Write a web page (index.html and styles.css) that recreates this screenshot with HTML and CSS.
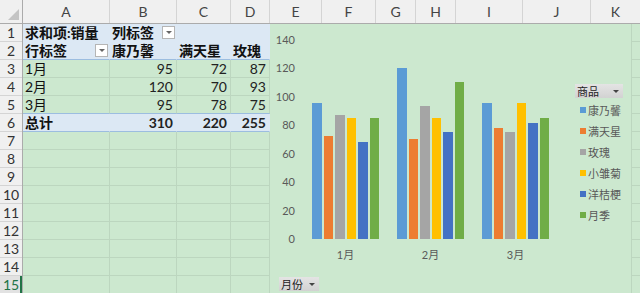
FILE: index.html
```html
<!DOCTYPE html>
<html>
<head>
    <title>数据透视表</title>
    <meta charset="utf-8">
    <link rel="stylesheet" href="styles.css">
</head>
<body>
<div class="sheet">
    <div class="col-heads">
        <div class="corner"><span class="corner-tri"></span></div>
        <div class="col-head" style="width: 87px">A</div>
        <div class="col-head" style="width: 67px">B</div>
        <div class="col-head" style="width: 54px">C</div>
        <div class="col-head" style="width: 39px">D</div>
        <div class="col-head" style="width: 52px">E</div>
        <div class="col-head" style="width: 54px">F</div>
        <div class="col-head" style="width: 40px">G</div>
        <div class="col-head" style="width: 40px">H</div>
        <div class="col-head" style="width: 67px">I</div>
        <div class="col-head" style="width: 68px">J</div>
        <div class="col-head last">K</div>
    </div>

    <div class="sheet-body">
        <div class="row-heads">
            <div class="row-head">1</div>
            <div class="row-head">2</div>
            <div class="row-head">3</div>
            <div class="row-head">4</div>
            <div class="row-head">5</div>
            <div class="row-head">6</div>
            <div class="row-head">7</div>
            <div class="row-head">8</div>
            <div class="row-head">9</div>
            <div class="row-head">10</div>
            <div class="row-head">11</div>
            <div class="row-head">12</div>
            <div class="row-head">13</div>
            <div class="row-head">14</div>
            <div class="row-head active">15</div>
        </div>

        <div class="cells">
            <div class="row pivot-head">
                <div class="cell">求和项:销量</div>
                <div class="cell has-filter">列标签<span class="filter"></span></div>
                <div class="cell"></div>
                <div class="cell"></div>
            </div>
            <div class="row pivot-head header-end">
                <div class="cell has-filter">行标签<span class="filter"></span></div>
                <div class="cell">康乃馨</div>
                <div class="cell">满天星</div>
                <div class="cell">玫瑰</div>
            </div>
            <div class="row">
                <div class="cell">1月</div>
                <div class="cell num">95</div>
                <div class="cell num">72</div>
                <div class="cell num">87</div>
            </div>
            <div class="row">
                <div class="cell">2月</div>
                <div class="cell num">120</div>
                <div class="cell num">70</div>
                <div class="cell num">93</div>
            </div>
            <div class="row before-total">
                <div class="cell">3月</div>
                <div class="cell num">95</div>
                <div class="cell num">78</div>
                <div class="cell num">75</div>
            </div>
            <div class="row pivot-total">
                <div class="cell">总计</div>
                <div class="cell num">310</div>
                <div class="cell num">220</div>
                <div class="cell num">255</div>
            </div>
            <div class="row"><div class="cell"></div><div class="cell"></div><div class="cell"></div><div class="cell"></div></div>
            <div class="row"><div class="cell"></div><div class="cell"></div><div class="cell"></div><div class="cell"></div></div>
            <div class="row"><div class="cell"></div><div class="cell"></div><div class="cell"></div><div class="cell"></div></div>
            <div class="row"><div class="cell"></div><div class="cell"></div><div class="cell"></div><div class="cell"></div></div>
            <div class="row"><div class="cell"></div><div class="cell"></div><div class="cell"></div><div class="cell"></div></div>
            <div class="row"><div class="cell"></div><div class="cell"></div><div class="cell"></div><div class="cell"></div></div>
            <div class="row"><div class="cell"></div><div class="cell"></div><div class="cell"></div><div class="cell"></div></div>
            <div class="row"><div class="cell"></div><div class="cell"></div><div class="cell"></div><div class="cell"></div></div>
            <div class="row"><div class="cell"></div><div class="cell"></div><div class="cell"></div><div class="cell"></div></div>
        </div>

        <!-- pivot chart -->
        <div class="chart">
            <div class="y-axis">
                <span class="tick">140</span>
                <span class="tick">120</span>
                <span class="tick">100</span>
                <span class="tick">80</span>
                <span class="tick">60</span>
                <span class="tick">40</span>
                <span class="tick">20</span>
                <span class="tick">0</span>
            </div>

            <div class="plot">
                <div class="group">
                    <div class="bar c1" style="height: 67.86%"></div>
                    <div class="bar c2" style="height: 51.43%"></div>
                    <div class="bar c3" style="height: 62.14%"></div>
                    <div class="bar c4" style="height: 60.71%"></div>
                    <div class="bar c5" style="height: 48.57%"></div>
                    <div class="bar c6" style="height: 60.71%"></div>
                </div>
                <div class="group">
                    <div class="bar c1" style="height: 85.71%"></div>
                    <div class="bar c2" style="height: 50%"></div>
                    <div class="bar c3" style="height: 66.43%"></div>
                    <div class="bar c4" style="height: 60.71%"></div>
                    <div class="bar c5" style="height: 53.57%"></div>
                    <div class="bar c6" style="height: 78.57%"></div>
                </div>
                <div class="group">
                    <div class="bar c1" style="height: 67.86%"></div>
                    <div class="bar c2" style="height: 55.71%"></div>
                    <div class="bar c3" style="height: 53.57%"></div>
                    <div class="bar c4" style="height: 67.86%"></div>
                    <div class="bar c5" style="height: 57.86%"></div>
                    <div class="bar c6" style="height: 60.71%"></div>
                </div>
            </div>

            <div class="x-axis">
                <span>1月</span>
                <span>2月</span>
                <span>3月</span>
            </div>

            <div class="field-row">
                <span class="field-btn">月份<span class="arrow"></span></span>
            </div>

            <div class="legend">
                <span class="field-btn legend-btn">商品<span class="arrow"></span></span>
                <div class="legend-item"><span class="swatch c1"></span>康乃馨</div>
                <div class="legend-item"><span class="swatch c2"></span>满天星</div>
                <div class="legend-item"><span class="swatch c3"></span>玫瑰</div>
                <div class="legend-item"><span class="swatch c4"></span>小雏菊</div>
                <div class="legend-item"><span class="swatch c5"></span>洋桔梗</div>
                <div class="legend-item"><span class="swatch c6"></span>月季</div>
            </div>
        </div>

        <div class="rest"></div>
    </div>
</div>
</body>
</html>
```

FILE: styles.css
```css
body {
    margin: 0;
    background-color: #cce8cf;
    color: #111;
    font-family: Lato, "Noto Sans CJK SC", sans-serif;
    overflow: hidden;
}

.sheet {
    width: 640px;
    height: 293px;
    overflow: hidden;
}

/* Column letters */
.col-heads {
    display: flex;
    height: 24px;
    background-color: #f0f0f0;
    border-bottom: 1px solid #ababab;
    box-sizing: border-box;
}

.corner {
    position: relative;
    width: 23px;
    flex-shrink: 0;
    border-right: 1px solid #ababab;
    box-sizing: border-box;
}

.corner-tri {
    position: absolute;
    right: 3px;
    bottom: 3px;
    width: 0;
    height: 0;
    border-left: 11px solid transparent;
    border-bottom: 11px solid #c4c4c4;
}

.col-head {
    flex-shrink: 0;
    border-right: 1px solid #d4d4d4;
    box-sizing: border-box;
    text-align: center;
    font-size: 14px;
    line-height: 23px;
    color: #444;
}

.col-head.last {
    flex: 1;
    border-right: none;
}

.sheet-body {
    display: flex;
    height: 270px;
}

/* Row numbers */
.row-heads {
    width: 23px;
    flex-shrink: 0;
    background-color: #f0f0f0;
    border-right: 1px solid #ababab;
    box-sizing: border-box;
}

.row-head {
    height: 18px;
    border-bottom: 1px solid #d4d4d4;
    box-sizing: border-box;
    text-align: center;
    font-size: 14px;
    line-height: 17px;
    color: #333;
}

.row-head.active {
    color: #217346;
    background-color: #e2e2e2;
    box-shadow: inset -2px 0 0 #217346;
}

/* Cells A-D */
.cells {
    flex-shrink: 0;
}

.row {
    display: grid;
    grid-template-columns: 87px 67px 54px 39px;
    height: 18px;
}

.cell {
    border-right: 1px solid #bcd6bf;
    border-bottom: 1px solid #bcd6bf;
    box-sizing: border-box;
    padding: 0 2px;
    font-size: 14px;
    line-height: 17px;
    white-space: nowrap;
    overflow: hidden;
}

.cell.num {
    text-align: right;
    padding-right: 3px;
    color: #222;
}

.has-filter {
    display: flex;
    justify-content: space-between;
    align-items: center;
    padding-right: 1px;
}

.filter {
    position: relative;
    width: 13px;
    height: 13px;
    background-color: #fff;
    border: 1px solid #b5b5b5;
    box-sizing: border-box;
}

.filter::after {
    content: "";
    position: absolute;
    left: 3px;
    top: 4px;
    border-left: 3px solid transparent;
    border-right: 3px solid transparent;
    border-top: 3px solid #666;
}

/* Pivot table style */
.pivot-head .cell,
.pivot-total .cell {
    background-color: #dce8f4;
    border-right-color: #dce8f4;
    border-bottom-color: #dce8f4;
    font-weight: bold;
}

.header-end .cell,
.before-total .cell,
.pivot-total .cell {
    border-bottom-color: #9cbde0;
}

/* Chart */
.chart {
    width: 362px;
    flex-shrink: 0;
    display: grid;
    grid-template-columns: 33px 255px 1fr;
    grid-template-rows: 15px 200px 28px 1fr;
    border-right: 1px solid #bcd6bf;
    box-sizing: border-box;
    color: #595959;
}

.y-axis {
    grid-column: 1;
    grid-row: 2;
    display: flex;
    flex-direction: column;
    justify-content: space-between;
    align-items: flex-end;
    padding-right: 8px;
}

.tick {
    height: 0;
    display: flex;
    align-items: center;
    font-size: 11px;
}

.plot {
    grid-column: 2;
    grid-row: 2;
    display: flex;
}

.group {
    flex: 1;
    display: flex;
    align-items: flex-end;
    gap: 2px;
    padding: 0 9px;
}

.bar {
    flex: 1;
}

.c1 { background-color: #5b9bd5; }
.c2 { background-color: #ed7d31; }
.c3 { background-color: #a5a5a5; }
.c4 { background-color: #ffc000; }
.c5 { background-color: #4472c4; }
.c6 { background-color: #70ad47; }

.x-axis {
    grid-column: 2;
    grid-row: 3;
    display: flex;
    padding-top: 9px;
}

.x-axis span {
    flex: 1;
    text-align: center;
    font-size: 11px;
    line-height: 14px;
}

.field-row {
    grid-column: 1 / span 2;
    grid-row: 4;
    padding: 6px 0 0 9px;
}

.field-btn {
    display: inline-flex;
    align-items: center;
    justify-content: space-between;
    width: 40px;
    height: 14px;
    padding: 0 4px 0 2px;
    box-sizing: border-box;
    background: linear-gradient(#e4e4e4, #d2d2d2);
    font-size: 11px;
    color: #222;
}

.arrow {
    border-left: 3px solid transparent;
    border-right: 3px solid transparent;
    border-top: 3px solid #444;
}

.legend {
    grid-column: 3;
    grid-row: 1 / -1;
    padding: 56px 0 0 17px;
}

.legend-btn {
    width: 48px;
    margin-bottom: 1px;
}

.legend-item {
    display: flex;
    align-items: center;
    gap: 2px;
    height: 21px;
    padding-left: 5px;
    font-size: 11px;
}

.swatch {
    width: 6px;
    height: 6px;
}

.rest {
    flex: 1;
    background-image: repeating-linear-gradient(to bottom, transparent 0, transparent 17px, #bcd6bf 17px, #bcd6bf 18px);
}
```
